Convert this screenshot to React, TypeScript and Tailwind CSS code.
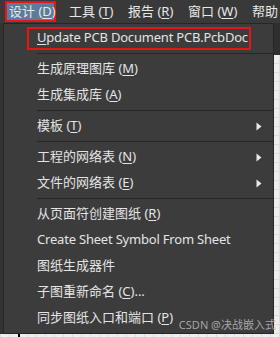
const font = { fontFamily: '"Noto Sans", "Noto Sans CJK SC", sans-serif' }

function Key({ k }: { k: string }) {
 return <span className="underline underline-offset-[2px] decoration-1">{k}</span>
}

function Arrow() {
 return (
  <svg width="6" height="9" viewBox="0 0 6 9" className="ml-auto">
   <path d="M0.5 0.5 L5.5 4.5 L0.5 8.5 Z" fill="#e8e8e8" />
  </svg>
 )
}

function Item({ children, sub }: { children: React.ReactNode; sub?: boolean }) {
 return (
  <div className="flex h-[26px] items-center pl-[33px] pr-[11px] whitespace-nowrap">
   <span>{children}</span>
   {sub && <Arrow />}
  </div>
 )
}

function Sep() {
 return (
  <div className="py-[2px] pl-[33px]">
   <div className="h-px bg-[#262626]" />
  </div>
 )
}

export default function App() {
 return (
  <div
   className="relative flex h-[337px] w-[280px] flex-col overflow-hidden bg-[#eeeeee] bg-[linear-gradient(#dcdcdc_1px,transparent_1px),linear-gradient(90deg,#dcdcdc_1px,transparent_1px)] bg-[size:9px_9px] text-[13px] text-[#e4e4e4]"
   style={font}
  >
   {/* menu bar */}
   <div className="flex h-[23px] shrink-0 items-start bg-[#393939] text-[13px] text-[#e8e8e8] whitespace-nowrap">
    <div className="ml-[5px] mt-[1px] flex h-[21px] w-[51px] items-center border-2 border-[#e3161b] bg-[#5b7c9a] pl-[2px]">
     设计 (<Key k="D" />)
    </div>
    <div className="ml-[13px] flex h-[23px] w-[59px] items-center">
     工具 (<Key k="T" />)
    </div>
    <div className="flex h-[23px] w-[60px] items-center">
     报告 (<Key k="R" />)
    </div>
    <div className="flex h-[23px] w-[64px] items-center">
     窗口 (<Key k="W" />)
    </div>
    <div className="flex h-[23px] items-center">帮助</div>
   </div>

   <div className="flex h-[311px] shrink-0">
    <div className="w-[3px] bg-[#333333]" />
    {/* dropdown */}
    <div className="flex w-[271px] flex-col border border-[#262626] bg-[#3c3c3c] py-px">
     <div className="flex h-[26px] items-center">
      <div className="ml-[23px] flex h-[23px] w-[224px] items-center border-2 border-[#e3161b] pl-[8px] tracking-[-0.2px] whitespace-nowrap">
       <Key k="U" />pdate PCB Document PCB.PcbDoc
      </div>
     </div>
     <Sep />
     <Item>
      生成原理图库 (<Key k="M" />)
     </Item>
     <Item>
      生成集成库 (<Key k="A" />)
     </Item>
     <Sep />
     <Item sub>
      模板 (<Key k="T" />)
     </Item>
     <Sep />
     <Item sub>
      工程的网络表 (<Key k="N" />)
     </Item>
     <Item sub>
      文件的网络表 (<Key k="E" />)
     </Item>
     <Sep />
     <Item>
      从页面符创建图纸 (<Key k="R" />)
     </Item>
     <Item>
      <span className="tracking-[-0.2px]">Create Sheet Symbol From Sheet</span>
     </Item>
     <Item>图纸生成器件</Item>
     <Item>
      子图重新命名 (<Key k="C" />)...
     </Item>
     <Item>
      同步图纸入口和端口 (<Key k="P" />)
     </Item>
    </div>
    <div className="flex flex-1 flex-col">
     <div className="h-[32px] bg-[#2f2f2f]" />
    </div>
   </div>

   <div className="flex flex-1">
    <div className="ml-[18px] w-[2px] bg-black" />
   </div>

   <div className="absolute right-[4px] top-[317px] text-[11px] text-[#b4b4b4]/90 whitespace-nowrap">
    CSDN @决战嵌入式
   </div>
  </div>
 )
}
